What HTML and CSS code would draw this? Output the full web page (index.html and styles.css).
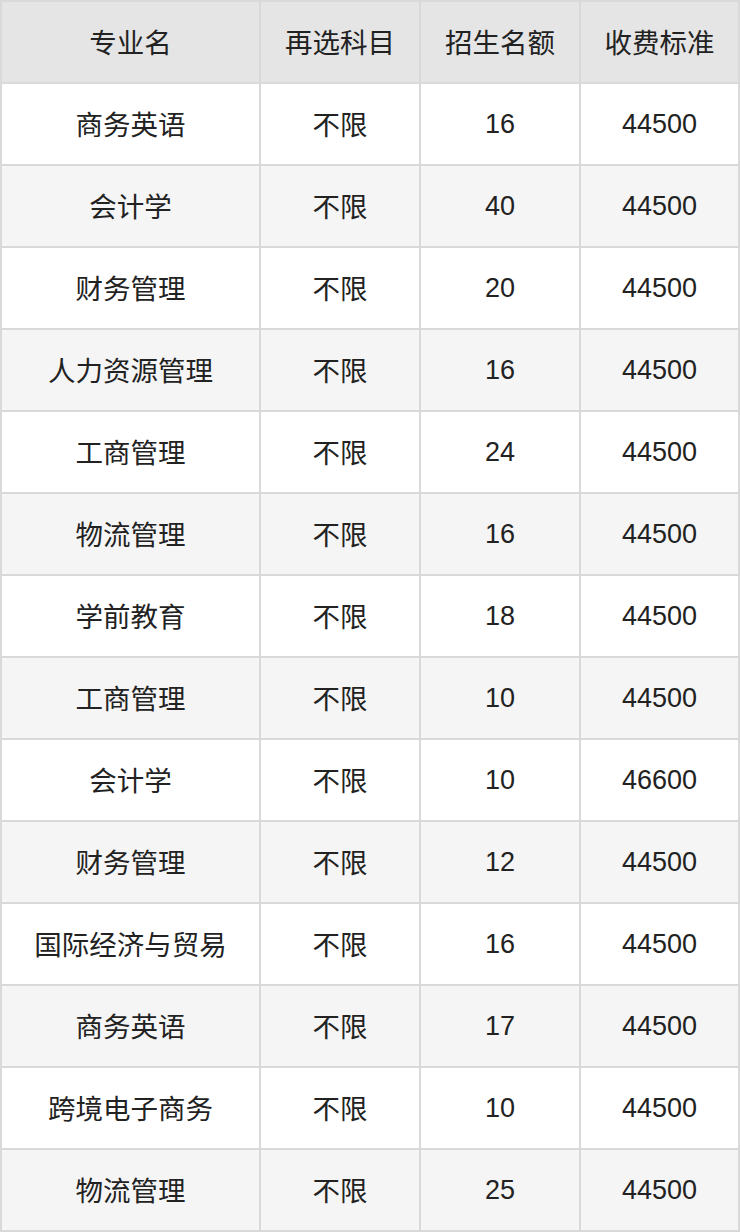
FILE: index.html
```html
<!DOCTYPE html>
<html lang="zh-CN">
<head>
<meta charset="utf-8">
<link rel="stylesheet" href="styles.css">
</head>
<body>
<div class="table">
  <div class="row head"><div class="cell zh">专业名</div><div class="cell zh">再选科目</div><div class="cell zh">招生名额</div><div class="cell zh">收费标准</div></div>
  <div class="row"><div class="cell zh">商务英语</div><div class="cell zh">不限</div><div class="cell">16</div><div class="cell">44500</div></div>
  <div class="row alt"><div class="cell zh">会计学</div><div class="cell zh">不限</div><div class="cell">40</div><div class="cell">44500</div></div>
  <div class="row"><div class="cell zh">财务管理</div><div class="cell zh">不限</div><div class="cell">20</div><div class="cell">44500</div></div>
  <div class="row alt"><div class="cell zh">人力资源管理</div><div class="cell zh">不限</div><div class="cell">16</div><div class="cell">44500</div></div>
  <div class="row"><div class="cell zh">工商管理</div><div class="cell zh">不限</div><div class="cell">24</div><div class="cell">44500</div></div>
  <div class="row alt"><div class="cell zh">物流管理</div><div class="cell zh">不限</div><div class="cell">16</div><div class="cell">44500</div></div>
  <div class="row"><div class="cell zh">学前教育</div><div class="cell zh">不限</div><div class="cell">18</div><div class="cell">44500</div></div>
  <div class="row alt"><div class="cell zh">工商管理</div><div class="cell zh">不限</div><div class="cell">10</div><div class="cell">44500</div></div>
  <div class="row"><div class="cell zh">会计学</div><div class="cell zh">不限</div><div class="cell">10</div><div class="cell">46600</div></div>
  <div class="row alt"><div class="cell zh">财务管理</div><div class="cell zh">不限</div><div class="cell">12</div><div class="cell">44500</div></div>
  <div class="row"><div class="cell zh">国际经济与贸易</div><div class="cell zh">不限</div><div class="cell">16</div><div class="cell">44500</div></div>
  <div class="row alt"><div class="cell zh">商务英语</div><div class="cell zh">不限</div><div class="cell">17</div><div class="cell">44500</div></div>
  <div class="row"><div class="cell zh">跨境电子商务</div><div class="cell zh">不限</div><div class="cell">10</div><div class="cell">44500</div></div>
  <div class="row alt"><div class="cell zh">物流管理</div><div class="cell zh">不限</div><div class="cell">25</div><div class="cell">44500</div></div>
</div>
</body>
</html>
```
FILE: styles.css
```css
html, body {
  margin: 0;
  padding: 0;
  background: #ffffff;
}
.table {
  width: 740px;
  box-sizing: border-box;
  display: grid;
  grid-template-columns: 257px 158px 158px 157px;
  grid-auto-rows: 80px;
  gap: 2px;
  padding: 2px;
  background: #d9d9d9;
  font-family: "Liberation Sans", "Noto Sans CJK SC", sans-serif;
  font-size: 27px;
  color: #222222;
}
.row {
  display: contents;
}
.cell {
  display: flex;
  align-items: center;
  justify-content: center;
  background: #ffffff;
  line-height: 1;
}
.cell.zh {
  font-family: "Noto Sans CJK SC", sans-serif;
  font-size: 27.5px;
}
.row.alt .cell {
  background: #f5f5f5;
}
.row.head .cell {
  background: #e5e5e5;
}
```
